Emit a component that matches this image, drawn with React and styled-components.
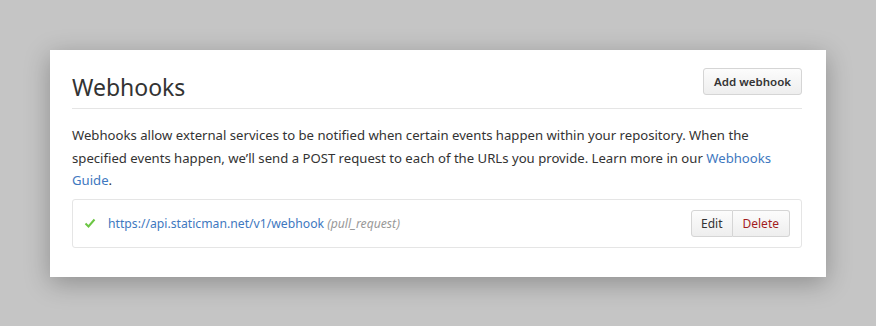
import React from 'react';
import styled, { createGlobalStyle } from 'styled-components';

const Global = createGlobalStyle`
    html, body {
        margin: 0;
        padding: 0;
        background: #c5c5c5;
    }
    body {
        font-family: "Noto Sans", "Open Sans", sans-serif;
        color: #333333;
    }
`;

const Page = styled.div`
    padding: 50px;
    box-sizing: border-box;
    width: 876px;
    height: 326px;
`;

const Panel = styled.div`
    width: 776px;
    box-sizing: border-box;
    background: #ffffff;
    padding: 18px 24px 29px 22px;
    box-shadow: 0 6px 24px rgba(0, 0, 0, 0.28);
`;

//HEADER
const Header = styled.div`
    display: flex;
    align-items: flex-start;
    justify-content: space-between;
    border-bottom: 1px solid #e5e5e5;
    padding-bottom: 13px;
`;

const Title = styled.h2`
    margin: 6px 0 -6px 0;
    font-size: 23px;
    font-weight: 400;
    line-height: 27px;
    color: #333333;
`;

const Button = styled.button`
    font-family: inherit;
    font-size: 11.5px;
    font-weight: 600;
    height: 27px;
    padding: 0 10px;
    color: ${p => (p.danger ? '#a31d1d' : '#333333')};
    background: linear-gradient(#fcfcfc, #eeeeee);
    border: 1px solid #d5d5d5;
    border-radius: 3px;
    cursor: pointer;
`;

const Intro = styled.p`
    margin: 15px 0 7px 0;
    font-size: 13.15px;
    line-height: 22.5px;
`;

const Link = styled.a`
    color: #4078c0;
    text-decoration: none;
`;

//HOOK ROW
const HookBox = styled.div`
    display: flex;
    align-items: center;
    justify-content: space-between;
    border: 1px solid #e5e5e5;
    border-radius: 3px;
    height: 49px;
    box-sizing: border-box;
    padding: 0 11px 0 11px;
`;

const HookInfo = styled.div`
    display: flex;
    align-items: center;
    gap: 12px;
    font-size: 12.2px;
`;

const Events = styled.span`
    color: #999999;
    font-style: italic;
`;

const BtnGroup = styled.div`
    display: flex;
    ${Button} {
        border-radius: 0;
        font-weight: 400;
        font-size: 12px;
        padding: 0 10px;
    }
    ${Button}:first-child {
        border-radius: 3px 0 0 3px;
        padding: 0 9px;
    }
    ${Button}:last-child {
        border-radius: 0 3px 3px 0;
        border-left: none;
    }
`;

const Check = () => (
    <svg width="12" height="12" viewBox="0 0 12 12">
        <path d="M1.5 6.5 L4.5 9.5 L10.5 2.5" fill="none" stroke="#6cc644" strokeWidth="2" />
    </svg>
);

const App = () => {
    return <Page>
        <Global />
        <Panel>
            <Header>
                <Title>Webhooks</Title>
                <Button>Add webhook</Button>
            </Header>

            <Intro>
                Webhooks allow external services to be notified when certain events happen within your repository. When the specified events happen, we’ll send a POST request to each of the URLs you provide. Learn more in our <Link href="#">Webhooks Guide</Link>.
            </Intro>

            <HookBox>
                <HookInfo>
                    <Check />
                    <span>
                        <Link href="#">https://api.staticman.net/v1/webhook</Link> <Events>(pull_request)</Events>
                    </span>
                </HookInfo>
                <BtnGroup>
                    <Button>Edit</Button>
                    <Button danger>Delete</Button>
                </BtnGroup>
            </HookBox>
        </Panel>
    </Page>
}

export default App;
